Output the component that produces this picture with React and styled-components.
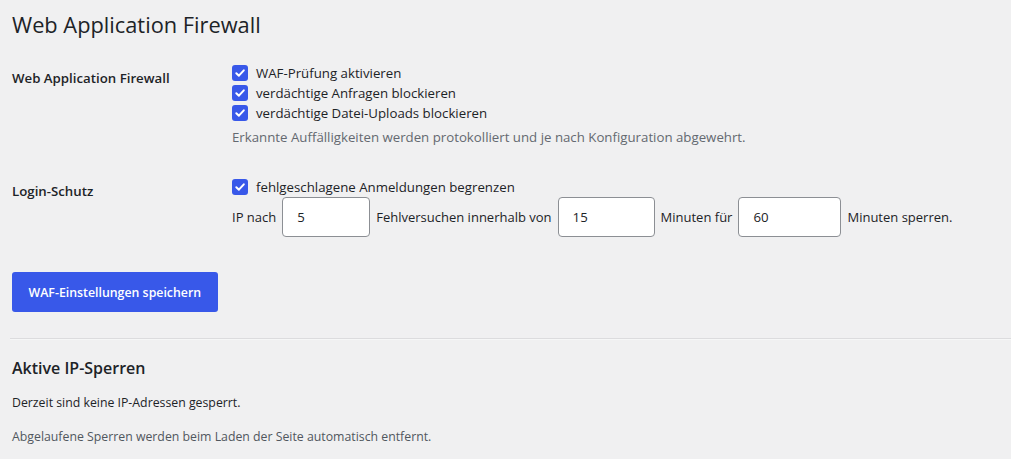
import React from 'react';
import styled, { createGlobalStyle } from 'styled-components';

const GlobalStyle = createGlobalStyle`
  html, body {
    margin: 0;
    padding: 0;
    background: #f0f0f1;
  }
  body {
    font-family: "Open Sans", "Noto Sans", sans-serif;
    font-size: 12.3px;
    color: #1d2327;
  }
`;

const Wrap = styled.div`
  padding: 0 0 0 12px;
`;

const Title = styled.h1`
  font-size: 21.8px;
  font-weight: 400;
  line-height: 30px;
  margin: 0;
  padding: 10px 0 0;
  color: #1d2327;
`;

const Table = styled.div`
  margin-top: 8px;
`;

const Row = styled.div`
  display: grid;
  grid-template-columns: 220px 1fr;
`;

const Label = styled.div`
  font-size: 13.25px;
  font-weight: 600;
  line-height: 18px;
  padding: ${p => p.$top}px 0 20px;
`;

const Field = styled.div`
  padding: 15px 0;
`;

const Check = styled.label`
  display: flex;
  align-items: center;
  gap: 8px;
  height: 20px;
  font-size: 13.25px;
`;

const Box = styled.span`
  width: 16px;
  height: 16px;
  border-radius: 3px;
  background: #3858e9;
  display: flex;
  align-items: center;
  justify-content: center;
  flex: none;
`;

const Description = styled.p`
  margin: 4px 0 0;
  font-size: 13.25px;
  line-height: 20px;
  color: #646970;
`;

const Inline = styled.div`
  display: flex;
  align-items: center;
  gap: 6px;
  font-size: 13px;
`;

const NumberInput = styled.input`
  box-sizing: border-box;
  width: ${p => p.$w}px;
  height: 40px;
  border: 1px solid #8c8f94;
  border-radius: 4px;
  background: #fff;
  padding: 0 14px;
  font-family: inherit;
  font-size: 13.25px;
  color: #1d2327;
  outline: none;
`;

const Submit = styled.div`
  padding: 20px 0 0;
`;

const Button = styled.button`
  height: 40px;
  padding: 0 16.5px;
  border: none;
  border-radius: 3px;
  background: #3858e9;
  color: #fff;
  font-family: inherit;
  font-size: 12.35px;
  font-weight: 600;
  cursor: pointer;
`;

const Divider = styled.hr`
  margin: 26px 0 0 -2px;
  border: none;
  border-top: 1px solid #dcdcde;
  border-bottom: 1px solid #f6f7f7;
`;

const SubTitle = styled.h2`
  font-size: 16px;
  font-weight: 600;
  line-height: 24px;
  margin: 16px 0 0;
`;

const Text = styled.p`
  margin: ${p => p.$top}px 0 0;
  font-size: 12.3px;
  line-height: 20px;
  color: ${p => (p.$muted ? '#50575e' : '#1d2327')};
`;

const Tick = () => (
  <svg width="12" height="12" viewBox="0 0 12 12">
    <path d="M2.3 6.2 L4.9 8.7 L9.8 3.3" fill="none" stroke="#fff" strokeWidth="2" strokeLinecap="round" strokeLinejoin="round" />
  </svg>
);

const Checkbox = ({ children }) => (
  <Check>
    <Box><Tick /></Box>
    {children}
  </Check>
);

const App = () => {
  return (
    <Wrap>
      <GlobalStyle />
      <Title>Web Application Firewall</Title>
      <Table>
        <Row>
          <Label $top={21}>Web Application Firewall</Label>
          <Field>
            <Checkbox>WAF-Prüfung aktivieren</Checkbox>
            <Checkbox>verdächtige Anfragen blockieren</Checkbox>
            <Checkbox>verdächtige Datei-Uploads blockieren</Checkbox>
            <Description>Erkannte Auffälligkeiten werden protokolliert und je nach Konfiguration abgewehrt.</Description>
          </Field>
        </Row>
        <Row>
          <Label $top={20}>Login-Schutz</Label>
          <Field>
            <Checkbox>fehlgeschlagene Anmeldungen begrenzen</Checkbox>
            <Inline>
              IP nach
              <NumberInput $w={88} defaultValue="5" />
              Fehlversuchen innerhalb von
              <NumberInput $w={97} defaultValue="15" />
              Minuten für
              <NumberInput $w={103} defaultValue="60" />
              Minuten sperren.
            </Inline>
          </Field>
        </Row>
      </Table>
      <Submit>
        <Button>WAF-Einstellungen speichern</Button>
      </Submit>
      <Divider />
      <SubTitle>Aktive IP-Sperren</SubTitle>
      <Text $top={13}>Derzeit sind keine IP-Adressen gesperrt.</Text>
      <Text $top={14} $muted>Abgelaufene Sperren werden beim Laden der Seite automatisch entfernt.</Text>
    </Wrap>
  );
};

export default App;
